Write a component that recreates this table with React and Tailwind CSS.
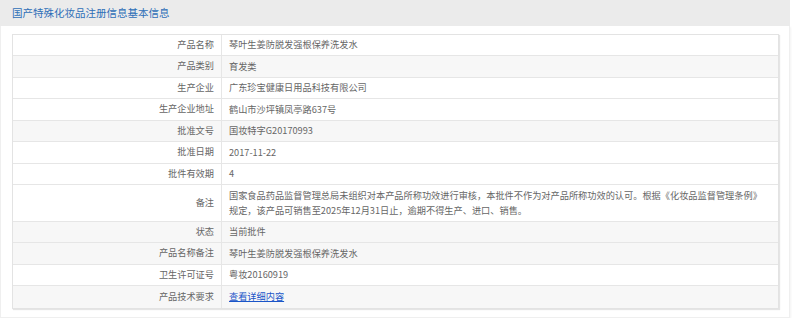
const ROWS = [
  { label: '产品名称', value: '琴叶生姜防脱发强根保养洗发水' },
  { label: '产品类别', value: '育发类', gray: true },
  { label: '生产企业', value: '广东珍宝健康日用品科技有限公司' },
  { label: '生产企业地址', value: '鹤山市沙坪镇凤亭路637号' },
  { label: '批准文号', value: '国妆特字G20170993', gray: true },
  { label: '批准日期', value: '2017-11-22' },
  { label: '批件有效期', value: '4' },
  {
    label: '备注',
    value:
      '国家食品药品监督管理总局未组织对本产品所称功效进行审核，本批件不作为对产品所称功效的认可。根据《化妆品监督管理条例》规定，该产品可销售至2025年12月31日止，逾期不得生产、进口、销售。',
    tall: true,
  },
  { label: '状态', value: '当前批件', gray: true },
  { label: '产品名称备注', value: '琴叶生姜防脱发强根保养洗发水', gray: true },
  { label: '卫生许可证号', value: '粤妆20160919' },
  { label: '产品技术要求', value: '查看详细内容', gray: true, link: true },
]

export default function App() {
  return (
    <div className="w-[800px] h-[318px] bg-white overflow-hidden"
         style={{ fontFamily: '"Noto Sans CJK SC", "Noto Sans", sans-serif' }}>
      <div className="w-[790px]">
        {/* 标题栏 */}
        <div className="h-[26px] bg-[#ebebeb] flex items-center pl-[12px] text-[10.5px] text-[#2f6fb8]">
          国产特殊化妆品注册信息基本信息
        </div>

        {/* 信息面板 */}
        <div className="border border-t-0 border-[#efefef] shadow-[1px_1px_2px_rgba(0,0,0,0.05)] pt-[7.5px] pl-[11px] pr-[10px] pb-[8px]">
          <div className="border border-[#e3e3e3] shadow-[1px_1px_1px_rgba(0,0,0,0.1)] text-[9.2px] text-[#666]">
            {ROWS.map((row, i) => (
              <div
                key={row.label}
                className={[
                  'flex',
                  i < ROWS.length - 1 ? 'border-b border-[#e6e6e6]' : '',
                  row.gray ? 'bg-[#f7f7f7]' : 'bg-white',
                  row.tall ? 'h-[36.5px]' : 'h-[21.5px]',
                ].join(' ')}
              >
                <div className="w-[209px] shrink-0 border-r border-[#e6e6e6] flex items-center justify-end pr-[7px]">
                  {row.label}
                </div>
                <div className="flex-1 flex items-center pl-[7px] pr-[16px] leading-[15px]">
                  {row.link ? (
                    <span className="text-[#1a55c8] underline">{row.value}</span>
                  ) : (
                    <span>{row.value}</span>
                  )}
                </div>
              </div>
            ))}
          </div>
        </div>
      </div>
    </div>
  )
}
